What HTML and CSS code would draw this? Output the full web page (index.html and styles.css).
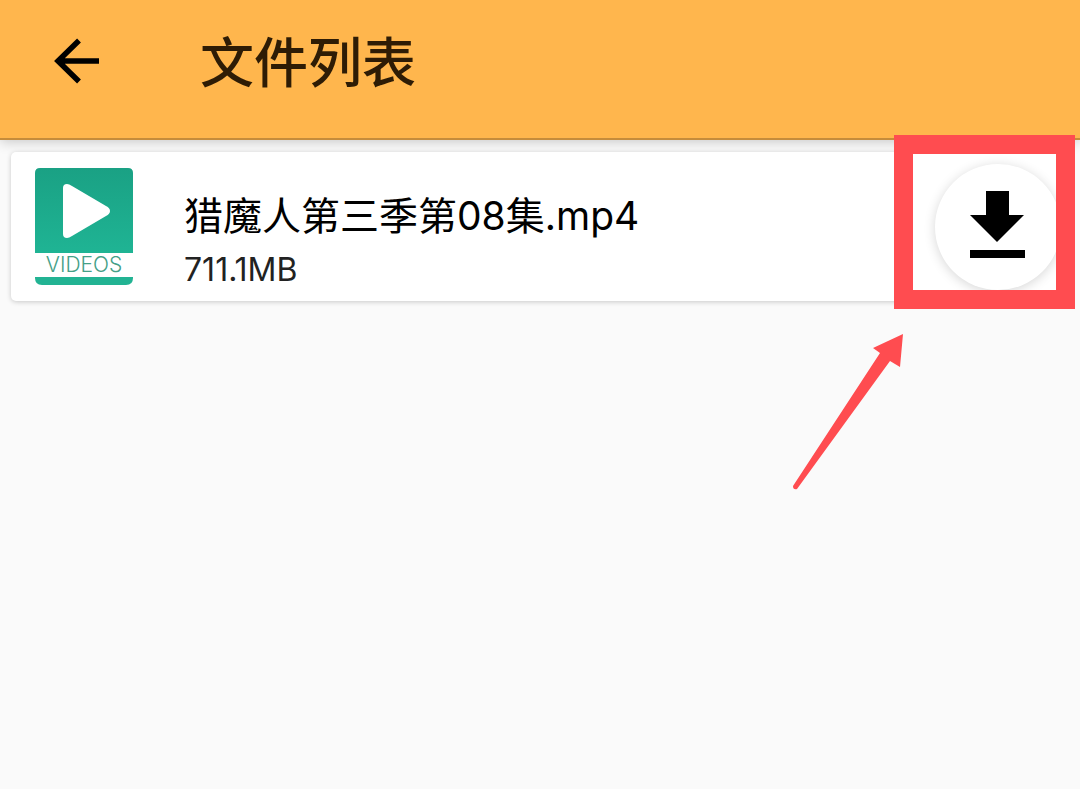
FILE: index.html
```html
<!DOCTYPE html>
<html lang="zh-CN">
<head>
<meta charset="utf-8">
<meta name="viewport" content="width=device-width, initial-scale=1">
<title>文件列表</title>
<link rel="stylesheet" href="styles.css">
</head>
<body>
<header class="app-bar">
  <button class="back" type="button" aria-label="返回">
    <svg class="back-icon" viewBox="0 0 48 48" aria-hidden="true"><path d="M45 25H5M25 4.500L4 25L25 45.500" fill="none" stroke="#000" stroke-width="5.500"/></svg>
  </button>
  <h1 class="title">文件列表</h1>
</header>
<main class="content">
  <ul class="files">
    <li class="file">
      <svg class="thumb" viewBox="0 0 98 117" role="img" aria-label="VIDEOS">
        <defs><linearGradient id="green" x1="0" y1="0" x2="0" y2="1"><stop offset="0" stop-color="#1aa184"/><stop offset="1" stop-color="#1fb494"/></linearGradient></defs>
        <path d="M0 85V5Q0 0 5 0H93Q98 0 98 5V85Z" fill="url(#green)"/>
        <path d="M28 20Q28 16 32 16Q34 16 37 18L71 38Q75 40 75 43Q75 46 71 48L37 68Q34 70 32 70Q28 70 28 66Z" fill="#fff"/>
        <text class="thumb-label" x="49" y="104" text-anchor="middle">VIDEOS</text>
        <path d="M0 109H98V110Q98 117 91 117H7Q0 117 0 110Z" fill="#22b393"/>
      </svg>
      <div class="details">
        <p class="name">猎魔人第三季第08集.mp4</p>
        <p class="size">711.1MB</p>
      </div>
      <div class="action">
        <button class="download" type="button" aria-label="下载">
          <svg class="download-icon" viewBox="0 0 56 68" aria-hidden="true"><path d="M16 -2H39V22H54L27 49L0 22H16ZM0 57H55V65H0Z"/></svg>
        </button>
        <div class="highlight"></div>
        <svg class="pointer" viewBox="0 0 112 158" aria-hidden="true"><path d="M111 1L81 15L88 20L1 153Q1 157 5 156L98 28L108 34Z" fill="#ff4c50"/></svg>
      </div>
    </li>
  </ul>
</main>
</body>
</html>
```
FILE: styles.css
```css
* {
  box-sizing: border-box;
}

body {
  margin: 0;
  min-height: 100vh;
  background: #fafafa;
  color: #000;
  font-family: Inter, "Noto Sans CJK SC", sans-serif;
}

.app-bar {
  display: flex;
  align-items: center;
  gap: 80px;
  height: 140px;
  padding: 0 36px 18px;
  background: #ffb64d;
  border-bottom: 2px solid #c68c3b;
  box-shadow: 0 2px 12px rgba(0, 0, 0, 0.2);
}

.back {
  display: flex;
  align-items: center;
  justify-content: center;
  width: 84px;
  height: 84px;
  padding: 0;
  border: 0;
  background: none;
}

.back-icon {
  width: 48px;
  height: 48px;
}

.title {
  margin: 0;
  color: #2e1c05;
  font-family: "Noto Sans CJK SC", sans-serif;
  font-size: 54px;
  line-height: 80px;
  font-weight: 500;
}

.content {
  padding: 12px 11px;
}

.files {
  margin: 0;
  padding: 0;
  list-style: none;
}

.file {
  display: flex;
  align-items: center;
  height: 149px;
  padding: 0 8px 0 24px;
  background: #fff;
  border-radius: 5px;
  box-shadow: 0 1px 5px rgba(0, 0, 0, 0.2);
}

.thumb {
  flex: none;
  width: 98px;
  height: 117px;
}

.thumb-label {
  fill: #44a087;
  font-family: Inter, sans-serif;
  font-size: 21px;
  font-weight: 300;
}

.details {
  flex: 1;
  min-width: 0;
  padding: 30px 0 0 51px;
}

.name,
.size {
  margin: 0;
}

.name {
  font-size: 39px;
  line-height: 56px;
}

.size {
  color: #222;
  font-size: 32px;
  line-height: 52px;
}

.action {
  position: relative;
  flex: none;
}

.download {
  display: flex;
  align-items: center;
  justify-content: center;
  width: 126px;
  height: 126px;
  padding: 0;
  border: 0;
  border-radius: 50%;
  background: #fff;
  box-shadow: 0 2px 12px rgba(0, 0, 0, 0.16);
}

.download-icon {
  width: 56px;
  height: 68px;
  overflow: visible;
}

.highlight {
  position: absolute;
  top: -29px;
  right: -14px;
  width: 181px;
  height: 174px;
  border: 19px solid #ff4c50;
  pointer-events: none;
}

.pointer {
  position: absolute;
  top: 169px;
  right: 157px;
  width: 112px;
  height: 158px;
  pointer-events: none;
}
```
